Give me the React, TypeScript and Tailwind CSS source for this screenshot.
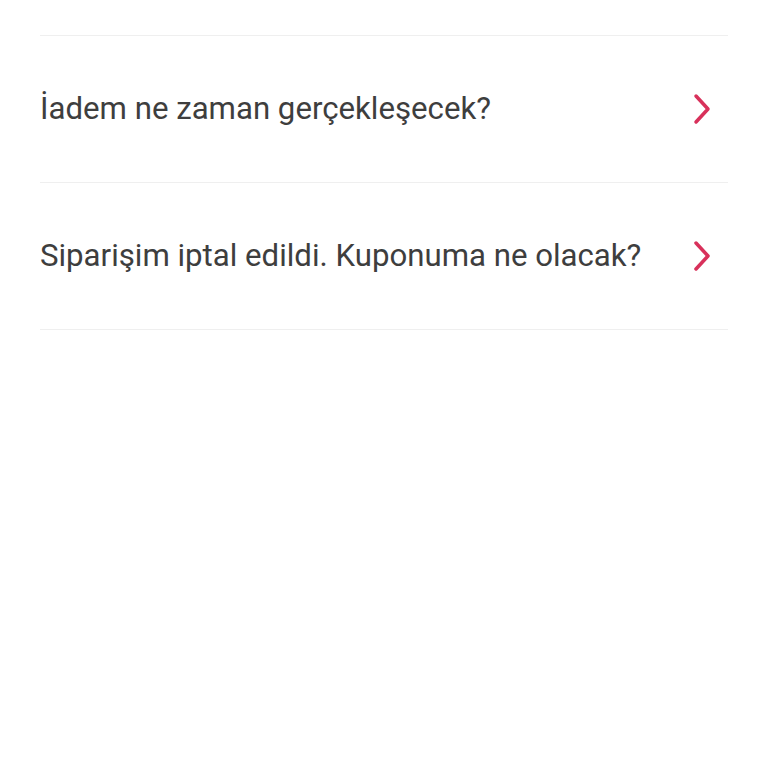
import React from "react";

const items = ["İadem ne zaman gerçekleşecek?", "Siparişim iptal edildi. Kuponuma ne olacak?"];

function Chevron() {
  return (
    <svg width="20" height="32" viewBox="0 0 20 32" fill="none" className="shrink-0">
      <path d="M4 3 L16 16 L4 29" stroke="#d8315b" strokeWidth="3.5" strokeLinecap="round" strokeLinejoin="round" />
    </svg>
  );
}

export default function App() {
  return (
    <div className="w-[768px] h-[768px] bg-white px-[40px] pt-[35px]" style={{ fontFamily: "Roboto, sans-serif" }}>
      <div className="border-t border-[#efefef]">
        {items.map((t) => (
          <div key={t} className="flex items-center justify-between h-[147px] border-b border-[#efefef] pr-[16px]">
            <span className="text-[31.2px] text-[#3e3e3e]">{t}</span>
            <Chevron />
          </div>
        ))}
      </div>
    </div>
  );
}
